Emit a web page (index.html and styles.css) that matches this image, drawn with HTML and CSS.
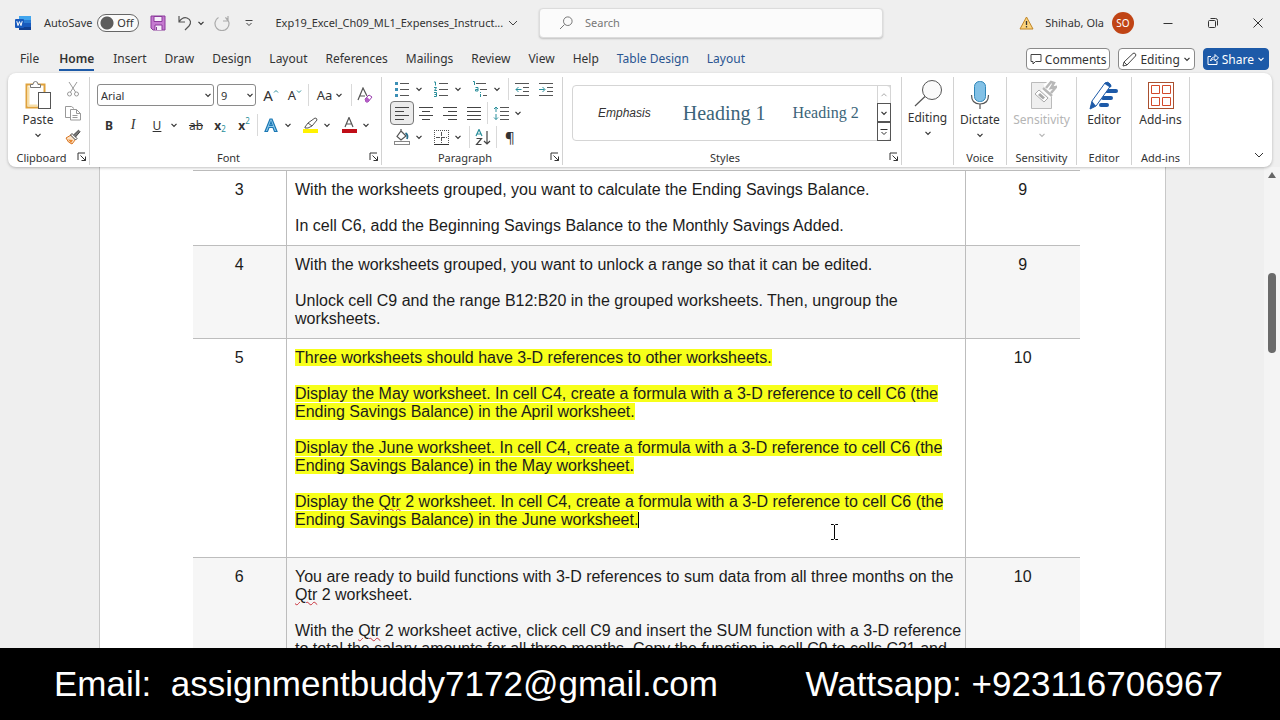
FILE: index.html
```html
<!DOCTYPE html>
<html lang="en">
<head>
    <meta charset="UTF-8">
    <meta name="viewport" content="width=device-width, initial-scale=1.0">
    <title>Exp19_Excel_Ch09_ML1_Expenses_Instructions - Word</title>
    <link rel="stylesheet" href="styles.css">
</head>
<body>
    <svg class="defs" aria-hidden="true">
        <symbol id="chev" viewBox="0 0 8 8"><path d="M1.5 2.8 4 5.3 6.5 2.8" fill="none" stroke="currentColor" stroke-width="1.2"/></symbol>
        <symbol id="launch" viewBox="0 0 10 10"><path d="M1 8V1h7M3.500 3.500 8.500 8.500M8.500 4.500v4h-4" fill="none" stroke="#333"/></symbol>
    </svg>

    <header class="titlebar">
        <div class="title-left">
            <svg class="word-logo" width="16" height="16" viewBox="0 0 16 16">
                <rect x="4" y="1" width="12" height="4" fill="#41a5ee"/>
                <rect x="4" y="5" width="12" height="3" fill="#2b7cd3"/>
                <rect x="4" y="8" width="12" height="4" fill="#185abd"/>
                <rect x="4" y="12" width="12" height="3" fill="#103f91"/>
                <rect x="0" y="4" width="9" height="9" rx="1" fill="#185abd"/>
                <path d="M1.800 6.200 3 10.600 4.500 6.600 6 10.600 7.200 6.200" fill="none" stroke="#fff"/>
            </svg>
            <label class="autosave" for="autosave">AutoSave</label>
            <span class="toggle"><input type="checkbox" id="autosave"><span>Off</span></span>
            <button class="tool save" aria-label="Save">
                <svg width="16" height="16" viewBox="0 0 16 16"><path d="M1 1h14v14H3l-2-2z" fill="#c57ad0" stroke="#8b3a9b"/><path d="M4 1.500h8v5H4zM5 15v-5h7v5" fill="#f6effa" stroke="#8b3a9b"/><path d="M6.500 12v3" stroke="#8b3a9b"/></svg>
            </button>
            <button class="tool" aria-label="Undo">
                <svg width="16" height="16" viewBox="0 0 16 16"><path d="M2 1v6h6M2 7c2-3 5-5 8-4 4 1.500 4.500 5 2 8l-4 4" fill="none" stroke="#555" stroke-width="1.200"/></svg>
            </button>
            <button class="chev" aria-label="Undo list"><svg><use href="#chev"/></svg></button>
            <button class="tool redo" aria-label="Redo">
                <svg width="16" height="16" viewBox="0 0 16 16"><path d="M14 1v5H9M4.500 2.500a7 7 0 1 0 7 0L14 6" fill="none" stroke="#aaa" stroke-width="1.200"/></svg>
            </button>
            <button class="tool" aria-label="Customize toolbar">
                <svg width="8" height="8" viewBox="0 0 8 8"><path d="M.500 1.500h7M1.500 4 4 6.500 6.500 4" fill="none" stroke="#444"/></svg>
            </button>
            <button class="doc-name">Exp19_Excel_Ch09_ML1_Expenses_Instruct...
                <svg width="10" height="8" viewBox="0 0 10 8"><path d="M1 2l4 4 4-4" fill="none" stroke="#444"/></svg>
            </button>
        </div>
        <div class="search">
            <svg width="14" height="14" viewBox="0 0 14 14"><path d="M5.500 8.500 1 13" stroke="#777"/><circle cx="8.800" cy="5.200" r="4.300" fill="none" stroke="#777"/></svg>
            <input type="search" placeholder="Search" aria-label="Search">
        </div>
        <div class="title-right">
            <svg width="15" height="14" viewBox="0 0 15 14"><path d="M7.500 1 14 13H1z" fill="#fbd37c" stroke="#c08425"/><path d="M7.500 5v4M7.500 10v1.500" stroke="#333" stroke-width="1.300"/></svg>
            <span class="user">Shihab, Ola</span>
            <span class="avatar">SO</span>
            <button class="win" aria-label="Minimize"><svg width="12" height="12" viewBox="0 0 12 12"><path d="M1.500 6.500h9" stroke="#333"/></svg></button>
            <button class="win" aria-label="Restore"><svg width="12" height="12" viewBox="0 0 12 12"><path d="M1.500 4.500q0-1 1-1h5q1 0 1 1v5q0 1-1 1h-5q-1 0-1-1zM3.500 1.500h5q2 0 2 2v5" fill="none" stroke="#333"/></svg></button>
            <button class="win" aria-label="Close"><svg width="12" height="12" viewBox="0 0 12 12"><path d="M1.500 1.500l9 9M10.500 1.500l-9 9" stroke="#333"/></svg></button>
        </div>
    </header>

    <nav class="tabs">
        <a href="#">File</a>
        <a href="#" class="active">Home</a>
        <a href="#">Insert</a>
        <a href="#">Draw</a>
        <a href="#">Design</a>
        <a href="#">Layout</a>
        <a href="#">References</a>
        <a href="#">Mailings</a>
        <a href="#">Review</a>
        <a href="#">View</a>
        <a href="#">Help</a>
        <a href="#" class="context">Table Design</a>
        <a href="#" class="context">Layout</a>
        <div class="actions">
            <button><svg width="12" height="12" viewBox="0 0 12 12"><path d="M1 1.500h10v7H5.500L3 11V8.500H1z" fill="none" stroke="#444"/></svg>Comments</button>
            <button><svg width="15" height="15" viewBox="0 0 15 15"><path d="M1 14l1-4L11 1.500q1-1 2.300.2 1 1.300.2 2.300L5 13zM2 10l3 3" fill="none" stroke="#444"/></svg>Editing<svg class="small"><use href="#chev"/></svg></button>
            <button class="share"><svg width="12" height="12" viewBox="0 0 12 12"><path d="M4 3.500H1v8h9V8M3.500 8C4 5 6 4 8 4V1.500L11.500 5 8 8V6C6 6 4.500 6.500 3.500 8z" fill="none" stroke="#fff"/></svg>Share<svg class="small"><use href="#chev"/></svg></button>
        </div>
    </nav>

    <section class="ribbon">
        <div class="group clipboard">
            <div class="group-body">
                <button class="big">
                    <svg width="30" height="30" viewBox="0 0 30 30"><rect x="3.500" y="4.500" width="18" height="23" fill="#fff" stroke="#dfa23c" stroke-width="2"/><path d="M5.500 6.500v19h9" fill="none" stroke="#f8dfa8" stroke-width="2"/><path d="M7.500 7.500v-3h2.500q0-3 2.500-3t2.500 3h2.500v3z" fill="#fff" stroke="#777"/><rect x="15.500" y="12.500" width="12" height="16" fill="#fff" stroke="#555"/></svg>
                    Paste
                    <svg class="small"><use href="#chev"/></svg>
                </button>
                <div class="rows">
                    <button class="tool" aria-label="Cut"><svg width="14" height="16" viewBox="0 0 14 16"><path d="M3 1l6.500 10M11 1 4.500 11" stroke="#999"/><circle cx="3.500" cy="13" r="2" fill="none" stroke="#999"/><circle cx="10.500" cy="13" r="2" fill="none" stroke="#999"/></svg></button>
                    <button class="tool" aria-label="Copy"><svg width="16" height="16" viewBox="0 0 16 16"><path d="M5 12.500H.500V1.500h6l2.500 2M5.500 4.500h6l4 4v6.500h-10zM11.500 4.500v4h4M7.500 10.500h5M7.500 12.500h5" fill="none" stroke="#999"/></svg></button>
                    <button class="tool" aria-label="Format Painter"><svg width="16" height="16" viewBox="0 0 16 16"><path d="M1 9l5-3 4.500 4.500L7 15q-4-1-6-6z" fill="#fbe3c8" stroke="#d9741f"/><path d="M3 10.500l5 .5-2 3z" fill="#e8872f"/><path d="M5.500 6 7 4.500l5 5L10.500 11z" fill="#fff" stroke="#444"/><path d="M8.500 6 13.500 1.200l1.500 1.500L10.500 8" fill="#777" stroke="#444"/></svg></button>
                </div>
            </div>
            <div class="group-foot"><span>Clipboard</span><button aria-label="Clipboard options"><svg><use href="#launch"/></svg></button></div>
        </div>

        <div class="group font">
            <div class="group-body">
                <div class="line">
                    <span class="combo name"><select aria-label="Font"><option>Arial</option></select><svg class="small"><use href="#chev"/></svg></span>
                    <span class="combo size"><select aria-label="Font size"><option>9</option></select><svg class="small"><use href="#chev"/></svg></span>
                    <button class="tool grow" aria-label="Grow font">A<svg width="6" height="12" viewBox="0 0 6 12"><path d="M1 3.500l2-2 2 2" fill="none" stroke="#2a8f9b"/></svg></button>
                    <button class="tool shrink" aria-label="Shrink font">A<svg width="6" height="12" viewBox="0 0 6 12"><path d="M1 1.500l2 2 2-2" fill="none" stroke="#2a8f9b"/></svg></button>
                    <i class="sep"></i>
                    <button class="tool case" aria-label="Change case">Aa<svg class="small"><use href="#chev"/></svg></button>
                    <i class="sep"></i>
                    <button class="tool" aria-label="Clear formatting"><svg width="16" height="16" viewBox="0 0 16 16"><path d="M1 13 6 1l4 8M3 9h5" fill="none" stroke="#555" stroke-width="1.200"/><path d="M8 12l4-4 3 2-4 5H9z" fill="#fff" stroke="#9a3fae"/><path d="M8 12l2-2 3 3-2 2H9z" fill="#b45cc6"/></svg></button>
                </div>
                <div class="line">
                    <button class="tool"><b>B</b></button>
                    <button class="tool italic">I</button>
                    <button class="tool"><u>U</u></button>
                    <button class="chev" aria-label="Underline styles"><svg><use href="#chev"/></svg></button>
                    <button class="tool"><s>ab</s></button>
                    <button class="tool"><b>x</b><sub>2</sub></button>
                    <button class="tool"><b>x</b><sup>2</sup></button>
                    <i class="sep"></i>
                    <button class="tool" aria-label="Text effects"><svg width="16" height="16" viewBox="0 0 16 16"><path d="M2 14.500 7 2h2l5 12.500h-2.500L10 10.500H6L4.500 14.500zM6.800 8.500h2.400L8 5z" fill="#8fc8ea" stroke="#1a78b4" stroke-width="1.200"/></svg></button>
                    <button class="chev" aria-label="Text effect list"><svg><use href="#chev"/></svg></button>
                    <button class="tool" aria-label="Highlight"><svg width="16" height="16" viewBox="0 0 16 16"><path d="M3 10l3-4 7-5q2 0 2 2l-5 6-4 2H3zM6 6l4 3" fill="none" stroke="#555"/><rect x="1" y="12" width="15" height="4" fill="#fff200"/></svg></button>
                    <button class="chev" aria-label="Highlight colors"><svg><use href="#chev"/></svg></button>
                    <button class="tool" aria-label="Font color"><svg width="16" height="16" viewBox="0 0 16 16"><path d="M4 10 8 .500 12 10M5.500 7h5" fill="none" stroke="#555" stroke-width="1.200"/><rect x="1" y="12" width="15" height="4" fill="#c00d17"/></svg></button>
                    <button class="chev" aria-label="Font colors"><svg><use href="#chev"/></svg></button>
                </div>
            </div>
            <div class="group-foot"><span>Font</span><button aria-label="Font options"><svg><use href="#launch"/></svg></button></div>
        </div>

        <div class="group paragraph">
            <div class="group-body rows">
                <div class="line">
                    <button class="tool" aria-label="Bullets"><svg width="16" height="16" viewBox="0 0 16 16"><path d="M6 2.500h9M6 8.500h9M6 14.500h9" stroke="#555"/><path d="M1 1h3v3H1zM1 7h3v3H1zM1 13h3v3H1z" fill="#3c8fb5"/></svg></button>
                    <button class="chev" aria-label="Bullet library"><svg><use href="#chev"/></svg></button>
                    <button class="tool" aria-label="Numbering"><svg width="16" height="16" viewBox="0 0 16 16"><path d="M6 2.500h9M6 8.500h9M6 14.500h9" stroke="#555"/><path d="M1 1h1.500v3.500M1 6.500h2.500L1.500 9.500h2.500M1 11.500h2.500v4H1M1.500 13.500h2" fill="none" stroke="#2a8f9b"/></svg></button>
                    <button class="chev" aria-label="Numbering library"><svg><use href="#chev"/></svg></button>
                    <button class="tool" aria-label="Multilevel list"><svg width="16" height="16" viewBox="0 0 16 16"><path d="M4 2.500h10M8 8.500h7M11 14.500h4" stroke="#555"/><path d="M1 .500h1.500V4M3.500 6.500h2.500v3.500H3.500V8.500H6M8.500 13v3M8.500 11v1" fill="none" stroke="#2a8f9b"/></svg></button>
                    <button class="chev" aria-label="Multilevel library"><svg><use href="#chev"/></svg></button>
                    <i class="sep"></i>
                    <button class="tool" aria-label="Decrease indent"><svg width="14" height="14" viewBox="0 0 14 14"><path d="M0 1.500h14M8 5.500h6M8 9.500h6M0 13.500h14" stroke="#555"/><path d="M6.500 7.500H1M3.500 5 1 7.500 3.500 10" fill="none" stroke="#2a8f9b"/></svg></button>
                    <button class="tool" aria-label="Increase indent"><svg width="14" height="14" viewBox="0 0 14 14"><path d="M0 1.500h14M8 5.500h6M8 9.500h6M0 13.500h14" stroke="#555"/><path d="M0 7.500h5.500M3.500 5 6 7.500 3.500 10" fill="none" stroke="#2a8f9b"/></svg></button>
                </div>
                <div class="line">
                    <button class="tool pressed" aria-label="Align left"><svg width="14" height="14" viewBox="0 0 14 14"><path d="M0 1.500h14M0 5.500h9M0 9.500h14M0 13.500h9" stroke="#444"/></svg></button>
                    <button class="tool" aria-label="Center"><svg width="14" height="14" viewBox="0 0 14 14"><path d="M0 1.500h14M3 5.500h8M0 9.500h14M3 13.500h8" stroke="#444"/></svg></button>
                    <button class="tool" aria-label="Align right"><svg width="14" height="14" viewBox="0 0 14 14"><path d="M0 1.500h14M5 5.500h9M0 9.500h14M5 13.500h9" stroke="#444"/></svg></button>
                    <button class="tool" aria-label="Justify"><svg width="14" height="14" viewBox="0 0 14 14"><path d="M0 1.500h14M0 5.500h14M0 9.500h14M0 13.500h14" stroke="#444"/></svg></button>
                    <i class="sep"></i>
                    <button class="tool" aria-label="Line spacing"><svg width="16" height="14" viewBox="0 0 16 14"><path d="M7 1.500h9M7 5.500h9M7 9.500h9M7 13.500h9" stroke="#555"/><path d="M3 1v5M1 3l2-2 2 2M3 8v5.500M1 11.500l2 2 2-2" fill="none" stroke="#2a8f9b"/></svg></button>
                    <button class="chev" aria-label="Spacing list"><svg><use href="#chev"/></svg></button>
                </div>
                <div class="line">
                    <button class="tool" aria-label="Shading"><svg width="16" height="16" viewBox="0 0 16 16"><path d="M7 2 12 7 7 11 3 7.500zM7 2V0" fill="none" stroke="#555" stroke-width="1.200"/><path d="M11.500 4q3 2 1.500 6" fill="none" stroke="#2a6f8b" stroke-width="1.800"/><rect x=".500" y="12.500" width="15" height="3" fill="#fff" stroke="#888"/></svg></button>
                    <button class="chev" aria-label="Shading colors"><svg><use href="#chev"/></svg></button>
                    <button class="tool" aria-label="Borders"><svg width="15" height="15" viewBox="0 0 15 15"><path d="M0 .500h14M.500 0v14M14.500 0v14" stroke="#555" stroke-dasharray="1 1"/><path d="M7.500 2v11M2 7.500h11" stroke="#555" stroke-dasharray="4 1"/><path d="M0 14.500h15" stroke="#333"/></svg></button>
                    <button class="chev" aria-label="Border list"><svg><use href="#chev"/></svg></button>
                    <i class="sep"></i>
                    <button class="tool" aria-label="Sort"><svg width="16" height="16" viewBox="0 0 16 16"><path d="M1 7l3-6.500L7 7M2 5h4" fill="none" stroke="#2a8f9b" stroke-width="1.200"/><path d="M1.500 9.500h5l-5 6h5M12 2v13M9 12l3 3 3-3" fill="none" stroke="#444" stroke-width="1.200"/></svg></button>
                    <i class="sep"></i>
                    <button class="tool pilcrow" aria-label="Show marks">¶</button>
                </div>
            </div>
            <div class="group-foot"><span>Paragraph</span><button aria-label="Paragraph options"><svg><use href="#launch"/></svg></button></div>
        </div>

        <div class="group styles">
            <div class="group-body">
                <div class="gallery">
                    <button class="emphasis">Emphasis</button>
                    <button class="heading1">Heading 1</button>
                    <button class="heading2">Heading 2</button>
                    <div class="gallery-nav">
                        <button class="off" aria-label="Previous styles"><svg width="8" height="8" viewBox="0 0 8 8"><path d="M1.500 5.200 4 2.700 6.500 5.200" fill="none" stroke="#aaa"/></svg></button>
                        <button aria-label="Next styles"><svg class="small"><use href="#chev"/></svg></button>
                        <button aria-label="More styles"><svg width="8" height="8" viewBox="0 0 8 8"><path d="M.500 1.500h7M1.500 4 4 6.500 6.500 4" fill="none" stroke="#333"/></svg></button>
                    </div>
                </div>
            </div>
            <div class="group-foot"><span>Styles</span><button aria-label="Style options"><svg><use href="#launch"/></svg></button></div>
        </div>

        <div class="group editing">
            <div class="group-body">
                <button class="big">
                    <svg width="30" height="28" viewBox="0 0 30 28"><circle cx="19" cy="10" r="9.500" fill="#fafafa" stroke="#555"/><path d="M12 16.500 2 26" stroke="#555" stroke-width="1.200"/></svg>
                    Editing
                    <svg class="small"><use href="#chev"/></svg>
                </button>
            </div>
        </div>

        <div class="group voice">
            <div class="group-body">
                <button class="big">
                    <svg width="30" height="30" viewBox="0 0 30 30"><rect x="9.500" y="1.500" width="11" height="20" rx="5" fill="#83c1e6" stroke="#2f86b8"/><path d="M6.500 15q0 9 8.500 9t8.500-9M15 24v5" fill="none" stroke="#555" stroke-width="1.200"/></svg>
                    Dictate
                    <svg class="small"><use href="#chev"/></svg>
                </button>
            </div>
            <div class="group-foot"><span>Voice</span></div>
        </div>

        <div class="group sensitivity">
            <div class="group-body">
                <button class="big" disabled>
                    <svg width="30" height="30" viewBox="0 0 30 30"><path d="M4.500 2.500h20v26h-20z" fill="#efefef" stroke="#bbb"/><path d="M8 14l4-4 9 8-4 4z" fill="#fff" stroke="#aaa"/><path d="M12 14l5 4.500" stroke="#aaa" stroke-width="3"/><path d="M16 8l9 8M18 7l8-5M22 12l6-6" fill="none" stroke="#fff" stroke-width="6"/><path d="M16 8l9 8M19 8l5-6 3 1-3 5 5-1-5 6" fill="none" stroke="#b8b8b8" stroke-width="2.500"/></svg>
                    Sensitivity
                    <svg class="small"><use href="#chev"/></svg>
                </button>
            </div>
            <div class="group-foot"><span>Sensitivity</span></div>
        </div>

        <div class="group editor">
            <div class="group-body">
                <button class="big">
                    <svg width="30" height="30" viewBox="0 0 30 30"><path d="M18 11h9M14 18h8M12 25h6" stroke="#1d5aa8" stroke-width="4" stroke-linecap="round"/><path d="M1 29l2-8L16 3q3-2 5 1 1 2-1 4L7 26z" fill="#fff" stroke="#1d5aa8"/><path d="M1 29l2-8 4 5zM15 3.500q3-3 6 0t0 4z" fill="#1d5aa8"/></svg>
                    Editor
                </button>
            </div>
            <div class="group-foot"><span>Editor</span></div>
        </div>

        <div class="group addins">
            <div class="group-body">
                <button class="big">
                    <svg width="30" height="30" viewBox="0 0 30 30"><rect x="2.500" y="2.500" width="25" height="26" fill="none" stroke="#a9502f"/><path d="M5.500 5.500h8v8h-8zM16.500 5.500h8v8h-8zM5.500 17.500h8v8h-8zM16.500 17.500h8v8h-8z" fill="#fff" stroke="#d2492a"/></svg>
                    Add-ins
                </button>
            </div>
            <div class="group-foot"><span>Add-ins</span></div>
        </div>

        <button class="collapse" aria-label="Collapse ribbon"><svg width="10" height="8" viewBox="0 0 10 8"><path d="M1 2l4 4 4-4" fill="none" stroke="#333"/></svg></button>
    </section>

    <main class="workspace">
        <div class="canvas">
            <article class="page">
                <table>
                    <colgroup><col class="col-step"><col><col class="col-points"></colgroup>
                    <tr>
                        <td>3</td>
                        <td>
                            <p>With the worksheets grouped, you want to calculate the Ending Savings Balance.</p>
                            <p>In cell C6, add the Beginning Savings Balance to the Monthly Savings Added.</p>
                        </td>
                        <td>9</td>
                    </tr>
                    <tr>
                        <td>4</td>
                        <td>
                            <p>With the worksheets grouped, you want to unlock a range so that it can be edited.</p>
                            <p>Unlock cell C9 and the range B12:B20 in the grouped worksheets. Then, ungroup the worksheets.</p>
                        </td>
                        <td>9</td>
                    </tr>
                    <tr>
                        <td>5</td>
                        <td class="current">
                            <p><mark>Three worksheets should have 3-D references to other worksheets.</mark></p>
                            <p><mark>Display the May worksheet. In cell C4, create a formula with a 3-D reference to cell C6 (the Ending Savings Balance) in the April worksheet.</mark></p>
                            <p><mark>Display the June worksheet. In cell C4, create a formula with a 3-D reference to cell C6 (the Ending Savings Balance) in the May worksheet.</mark></p>
                            <p><mark>Display the <span class="typo">Qtr</span> 2 worksheet. In cell C4, create a formula with a 3-D reference to cell C6 (the Ending Savings Balance) in the June worksheet.</mark><span class="caret"></span></p>
                            <svg class="pointer" width="9" height="16" viewBox="0 0 9 16"><path d="M1 .500h2.500l1 1 1-1H8M4.500 1v14M1 15.500h2.500l1-1 1 1H8" fill="none" stroke="#000"/></svg>
                        </td>
                        <td>10</td>
                    </tr>
                    <tr>
                        <td>6</td>
                        <td>
                            <p>You are ready to build functions with 3-D references to sum data from all three months on the <span class="typo">Qtr</span> 2 worksheet.</p>
                            <p>With the <span class="typo">Qtr</span> 2 worksheet active, click cell C9 and insert the SUM function with a 3-D reference to total the salary amounts for all three months. Copy the function in cell C9 to cells C21 and</p>
                        </td>
                        <td>10</td>
                    </tr>
                </table>
            </article>
        </div>
        <div class="scrollbar">
            <svg width="8" height="6" viewBox="0 0 8 6"><path d="M4 0l4 6H0z" fill="#666"/></svg>
            <div class="thumb"></div>
        </div>
    </main>

    <footer class="contact">
        <span>Email:&nbsp; assignmentbuddy7172@gmail.com</span>
        <span>Wattsapp: +923116706967</span>
    </footer>
</body>
</html>
```
FILE: styles.css
```css
:root {
    --chrome: #efefef;
    --text: #333;
    --accent: #1d5aa8;
    --line: #c8c8c8;
    --ui-font: "Noto Sans", "Open Sans", sans-serif;
}

* {
    box-sizing: border-box;
}

body {
    margin: 0;
    height: 100vh;
    display: flex;
    flex-direction: column;
    overflow: hidden;
    background: var(--chrome);
    color: var(--text);
    font-family: var(--ui-font);
    font-size: 12px;
}

button,
input,
select {
    font: inherit;
    color: inherit;
    border: 0;
    background: none;
    margin: 0;
    padding: 0;
}

svg {
    flex: none;
}

.defs {
    position: absolute;
    width: 0;
    height: 0;
}

.small,
.chev svg {
    width: 8px;
    height: 8px;
}

/* title bar */
.titlebar {
    display: flex;
    align-items: center;
    height: 45px;
    font-size: 11px;
}

.title-left {
    display: flex;
    align-items: center;
    flex: none;
    width: 539px;
    padding-left: 15px;
}

.autosave {
    margin: 0 5px 0 13px;
}

.toggle {
    position: relative;
    width: 42px;
    height: 18px;
    margin-right: 5px;
}

.toggle input {
    appearance: none;
    display: block;
    width: 42px;
    height: 18px;
    border: 1px solid #666;
    border-radius: 9px;
    background: radial-gradient(circle at 9px 8px, #5c5c5c 6px, #fafafa 7px);
}

.toggle span {
    position: absolute;
    right: 6px;
    top: 1px;
    line-height: 16px;
    pointer-events: none;
}

.tool {
    display: flex;
    align-items: center;
    justify-content: center;
    flex: none;
    width: 24px;
    height: 24px;
}

.title-left .tool {
    width: 27px;
}

.chev {
    display: flex;
    align-items: center;
    justify-content: center;
    width: 10px;
    height: 24px;
    margin-right: 5px;
}

.title-left .chev {
    margin: 0 2px 0 -2px;
}

.doc-name {
    display: flex;
    align-items: center;
    gap: 5px;
    margin-left: 13px;
    white-space: nowrap;
}

.search {
    display: flex;
    align-items: center;
    flex: 0 1 344px;
    height: 30px;
    padding: 0 19px;
    gap: 12px;
    background: #fbfbfb;
    border: 1px solid #dcdcdc;
    border-radius: 4px;
    box-shadow: 0 1px 2px rgba(0, 0, 0, 0.2);
}

.search input {
    flex: 1;
    min-width: 0;
    outline: none;
}

.search input::placeholder {
    color: #777;
}

.title-right {
    display: flex;
    align-items: center;
    margin-left: auto;
}

.user {
    margin: 0 8px 0 11px;
}

.avatar {
    width: 22px;
    height: 22px;
    margin-right: 11px;
    border-radius: 50%;
    background: #c04415;
    color: #fff;
    font-size: 10px;
    line-height: 22px;
    text-align: center;
}

.win {
    display: flex;
    align-items: center;
    justify-content: center;
    width: 45px;
    height: 32px;
}

/* tabs */
.tabs {
    display: flex;
    align-items: center;
    height: 28px;
    padding: 0 11px;
}

.tabs a {
    margin: 2px 9px 0;
    color: var(--text);
    line-height: 20px;
    text-decoration: none;
    border-bottom: 2px solid transparent;
}

.tabs .active {
    margin: 2px 10px 0 11px;
    font-weight: 600;
    border-color: var(--accent);
}

.tabs .context {
    color: #2a5591;
}

.actions {
    display: flex;
    gap: 8px;
    margin-left: auto;
}

.actions button {
    display: flex;
    align-items: center;
    gap: 3px;
    height: 22px;
    padding: 0 3px;
    background: #fff;
    border: 1px solid #8a8a8a;
    border-radius: 4px;
}

.actions .share {
    background: var(--accent);
    border-color: var(--accent);
    color: #fff;
}

/* ribbon */
.ribbon {
    position: relative;
    z-index: 1;
    display: flex;
    flex: none;
    height: 94px;
    margin: 0 8px;
    padding-right: 82px;
    background: #fff;
    border-radius: 8px;
    box-shadow: 0 1px 3px rgba(0, 0, 0, 0.25);
}

.group {
    display: flex;
    flex-direction: column;
    flex: none;
    margin: 4px 0 2px;
    border-right: 1px solid #d2d2d2;
}

.group-body {
    display: flex;
    flex: none;
    height: 72px;
}

.group-foot {
    display: flex;
    align-items: center;
    height: 16px;
    font-size: 11px;
}

.group-foot span {
    flex: 1;
    text-align: center;
}

.group-foot button {
    width: 14px;
    height: 14px;
}

.group-foot svg {
    display: block;
    width: 10px;
    height: 10px;
    margin: 2px;
}

.clipboard { width: 82px; }
.font { width: 292px; }
.paragraph { width: 181px; }
.styles { flex: 1; }
.editing { width: 52px; }
.voice { width: 53px; }
.sensitivity { width: 70px; }
.editor { width: 55px; }
.addins { width: 58px; }

.clipboard .group-body {
    padding-left: 7px;
}

.clipboard .rows {
    width: 28px;
}

.big {
    display: flex;
    flex-direction: column;
    align-items: center;
    flex: 1;
    padding-top: 3px;
    line-height: 20px;
    white-space: nowrap;
}

.big .small {
    margin-top: 1px;
}

.big:disabled {
    color: #b5b5b5;
}

.rows {
    display: flex;
    flex-direction: column;
}

.line {
    display: flex;
    align-items: center;
    height: 24px;
}

.font .group-body {
    flex-direction: column;
    gap: 6px;
    padding: 6px 0 0 7px;
}

.paragraph .group-body {
    padding-left: 8px;
}

.combo {
    position: relative;
    height: 22px;
    margin-right: 3px;
}

.combo select {
    appearance: none;
    width: 100%;
    height: 22px;
    padding: 0 3px;
    border: 1px solid #8a8a8a;
    border-radius: 3px;
    font-size: 11px;
}

.combo svg {
    position: absolute;
    right: 2px;
    top: 7px;
    pointer-events: none;
}

.combo.name { width: 117px; }
.combo.size { width: 39px; }

.sep {
    width: 1px;
    height: 22px;
    margin: 0 1px;
    background: #d9d9d9;
}

.grow {
    font-size: 15px;
}

.shrink {
    font-size: 13px;
}

.case {
    width: 40px;
    gap: 3px;
    font-size: 13px;
}

.italic {
    font-family: "Liberation Serif", serif;
    font-size: 14px;
    font-style: italic;
}

.tool sub,
.tool sup {
    font-size: 8px;
    line-height: 8px;
    color: #2a8f9b;
}

.tool sub {
    padding-top: 8px;
}

.tool sup {
    padding-bottom: 8px;
}

.pressed {
    background: #ebebeb;
    border: 1px solid #777;
    border-radius: 4px;
}

.pilcrow {
    font-size: 15px;
}

.gallery {
    display: flex;
    flex: 1;
    align-items: center;
    height: 56px;
    margin: 8px 10px 0 9px;
    padding-left: 25px;
    border: 1px solid #d5d5d5;
    border-radius: 4px;
}

.emphasis {
    font-family: "Liberation Sans", Arial, sans-serif;
    font-style: italic;
}

.heading1,
.heading2 {
    font-family: "Liberation Serif", "Times New Roman", serif;
    color: #3b6479;
    white-space: nowrap;
}

.heading1 {
    margin: 0 27px 0 32px;
    font-size: 20px;
}

.heading2 {
    font-size: 16px;
}

.gallery-nav {
    display: flex;
    flex-direction: column;
    align-self: stretch;
    margin: -1px -1px -1px auto;
}

.gallery-nav button {
    display: flex;
    align-items: center;
    justify-content: center;
    flex: 1;
    width: 14px;
    border: 1px solid #555;
}

.gallery-nav .off {
    border-color: #d5d5d5;
    border-bottom: 0;
}

.collapse {
    position: absolute;
    right: 8px;
    bottom: 8px;
    line-height: 8px;
}

/* document */
.workspace {
    display: flex;
    flex: 1;
    min-height: 0;
}

.canvas {
    flex: 1;
    display: flex;
    justify-content: center;
    overflow: hidden;
}

.page {
    width: 1067px;
    padding: 3px 85px 0 93px;
    background: #fff;
    border: solid var(--line);
    border-width: 0 1px;
}

table {
    width: 100%;
    border-collapse: collapse;
    table-layout: fixed;
    color: #1c1c1c;
    font-family: "Liberation Sans", Arial, sans-serif;
    font-size: 16px;
    line-height: 18px;
}

.col-step {
    width: 94px;
}

.col-points {
    width: 114px;
}

td {
    padding: 10px 0 10px 8px;
    vertical-align: top;
    border: solid #bdbdbd;
    border-width: 1px 1px 0;
}

td:first-child,
td:last-child {
    padding: 10px 0;
    text-align: center;
}

td:first-child {
    border-left: 0;
}

td:last-child {
    border-right: 0;
}

tr:nth-child(even) {
    background: #f6f6f6;
}

td p {
    margin: 0 0 18px;
}

td p:last-of-type {
    margin-bottom: 0;
}

.current {
    position: relative;
    padding-bottom: 28px;
}

mark {
    background: #f7ff1a;
    color: inherit;
}

.typo {
    text-decoration: underline wavy #c8323c 1px;
}

.caret {
    display: inline-block;
    width: 1px;
    height: 16px;
    background: #000;
    vertical-align: -3px;
}

/* mouse pointer over the page */
.pointer {
    position: absolute;
    left: 543px;
    top: 185px;
}

.scrollbar {
    display: flex;
    flex-direction: column;
    align-items: center;
    width: 16px;
    padding-top: 5px;
    background: #f4f4f4;
}

.thumb {
    width: 8px;
    height: 80px;
    margin-top: 95px;
    border-radius: 4px;
    background: #6a6a6a;
}

/* contact strip */
.contact {
    position: relative;
    display: flex;
    flex: none;
    align-items: center;
    justify-content: space-between;
    height: 72px;
    padding: 0 57px 0 54px;
    background: #000;
    color: #fff;
    font-family: "Liberation Sans", Arial, sans-serif;
    font-size: 35px;
    white-space: nowrap;
}
```
